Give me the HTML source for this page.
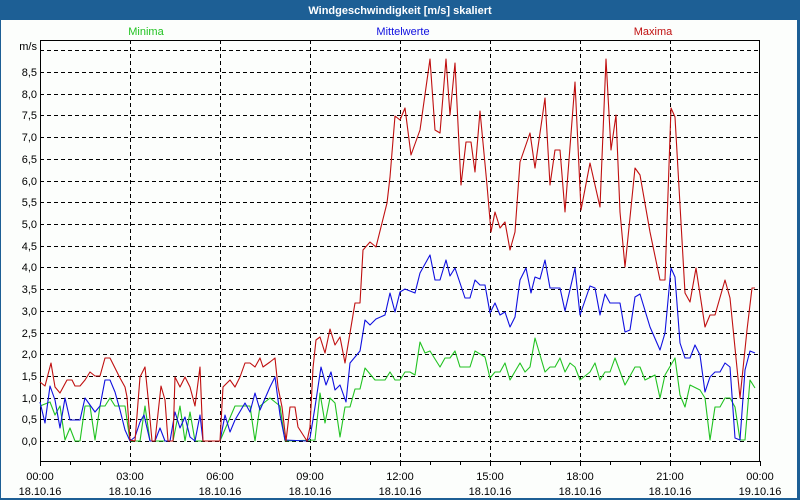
<!DOCTYPE html>
<html><head><meta charset="utf-8"><style>
html,body{margin:0;padding:0;width:800px;height:500px;overflow:hidden;background:#fff}
svg{display:block;font-family:"Liberation Sans","DejaVu Sans",sans-serif}
</style></head><body>
<svg width="800" height="500" viewBox="0 0 800 500" xmlns="http://www.w3.org/2000/svg">
<rect x="0" y="0" width="800" height="500" fill="#1d5f95"/>
<rect x="1" y="20" width="796" height="478" fill="#fcfefc"/>
<text x="400" y="14" fill="#fff" font-size="11" font-weight="bold" text-anchor="middle">Windgeschwindigkeit [m/s] skaliert</text>
<text x="146" y="35" fill="#22c322" font-size="11" text-anchor="middle">Minima</text>
<text x="403" y="35" fill="#1010e0" font-size="11" text-anchor="middle">Mittelwerte</text>
<text x="653" y="35" fill="#c01010" font-size="11" text-anchor="middle">Maxima</text>
<g stroke="#000" stroke-width="1" stroke-dasharray="4,3" fill="none" shape-rendering="crispEdges">
<path d="M40 50.5H760M40 72.5H760M40 94.5H760M40 115.5H760M40 137.5H760M40 159.5H760M40 181.5H760M40 202.5H760M40 224.5H760M40 246.5H760M40 267.5H760M40 289.5H760M40 311.5H760M40 333.5H760M40 354.5H760M40 376.5H760M40 398.5H760M40 419.5H760M40 441.5H760"/>
<path d="M130.5 40V461M220.5 40V461M310.5 40V461M400.5 40V461M490.5 40V461M580.5 40V461M670.5 40V461"/>
</g>
<g stroke="#000" stroke-width="1" fill="none" shape-rendering="crispEdges">
<rect x="40.5" y="40.5" width="719" height="421"/>
<path d="M40.5 461V466M70.5 461V465M100.5 461V465M130.5 461V466M160.5 461V465M190.5 461V465M220.5 461V466M250.5 461V465M280.5 461V465M310.5 461V466M340.5 461V465M370.5 461V465M400.5 461V466M430.5 461V465M460.5 461V465M490.5 461V466M520.5 461V465M550.5 461V465M580.5 461V466M610.5 461V465M640.5 461V465M670.5 461V466M700.5 461V465M730.5 461V465M760.5 461V466"/>
</g>
<g font-size="11" fill="#000" text-anchor="end">
<text x="37" y="50">m/s</text>
<text x="37" y="76">8,5</text><text x="37" y="98">8,0</text><text x="37" y="119">7,5</text><text x="37" y="141">7,0</text><text x="37" y="163">6,5</text><text x="37" y="185">6,0</text><text x="37" y="206">5,5</text><text x="37" y="228">5,0</text><text x="37" y="250">4,5</text><text x="37" y="271">4,0</text><text x="37" y="293">3,5</text><text x="37" y="315">3,0</text><text x="37" y="337">2,5</text><text x="37" y="358">2,0</text><text x="37" y="380">1,5</text><text x="37" y="402">1,0</text><text x="37" y="423">0,5</text><text x="37" y="445">0,0</text>
</g>
<g font-size="11" fill="#000" text-anchor="middle">
<text x="40" y="480">00:00</text><text x="40" y="495">18.10.16</text>
<text x="130" y="480">03:00</text><text x="130" y="495">18.10.16</text>
<text x="220" y="480">06:00</text><text x="220" y="495">18.10.16</text>
<text x="310" y="480">09:00</text><text x="310" y="495">18.10.16</text>
<text x="400" y="480">12:00</text><text x="400" y="495">18.10.16</text>
<text x="490" y="480">15:00</text><text x="490" y="495">18.10.16</text>
<text x="580" y="480">18:00</text><text x="580" y="495">18.10.16</text>
<text x="670" y="480">21:00</text><text x="670" y="495">18.10.16</text>
<text x="760" y="480">00:00</text><text x="760" y="495">19.10.16</text>
</g>
<g fill="none" stroke-width="1.1" stroke-linejoin="round">
<polyline stroke="#22c322" points="40,406 50,402 55,415 60,406 65,440 70,428 75,441 80,441 85,406 90,406 95,440 100,406 105,406 110,398 115,406 125,406 130,441 140,441 145,406 150,441 173,441 180,406 185,441 190,412 195,441 220,441 235,406 250,406 255,441 260,406 270,398 280,406 285,441 315,440 320,393 325,423 330,398 335,403 340,437 345,407 350,407 355,389 360,389 365,368 375,380 385,380 390,372 395,380 400,380 405,372 410,372 415,375 420,342 425,353 430,351 440,367 445,358 450,358 455,351 460,367 470,367 475,351 485,357 490,378 495,372 500,372 505,363 510,380 520,363 525,372 530,367 535,338 545,372 550,367 555,367 560,358 565,372 570,363 575,367 580,380 590,372 595,363 600,380 605,372 610,372 615,358 625,385 635,367 640,367 645,380 655,375 660,398 665,375 675,358 680,395 685,407 690,385 700,390 705,398 710,440 715,407 720,407 725,398 730,398 735,407 740,440 745,440 750,380 755,388"/>
<polyline stroke="#1010e0" points="40,402 45,423 50,386 55,400 60,428 65,398 70,420 80,420 85,398 95,412 100,406 105,380 110,380 115,392 120,410 125,430 130,441 135,437 140,422 144,415 150,441 155,441 160,428 165,441 170,441 175,412 180,428 185,417 190,437 195,441 200,415 203,441 220,441 225,415 230,432 235,420 245,403 250,412 255,393 260,410 270,387 275,377 280,415 285,440 307,441 310,438 315,407 321,367 326,385 331,372 335,390 340,385 346,402 350,363 360,351 365,320 370,325 376,319 385,315 390,293 395,312 400,292 405,289 415,293 420,273 430,255 435,280 440,280 446,260 450,276 455,268 465,298 470,298 475,280 480,285 485,285 490,313 495,303 500,315 505,312 510,327 515,317 520,280 526,268 531,293 535,277 540,279 545,260 550,288 560,288 565,311 575,268 580,315 590,286 595,288 600,315 605,294 610,303 620,303 625,332 630,330 635,297 640,294 650,327 660,350 665,333 671,268 675,277 680,343 685,358 690,358 695,345 700,355 705,392 710,377 715,372 720,372 725,363 730,367 735,438 740,440 745,370 750,351 755,353"/>
<polyline stroke="#c01010" points="40,382 45,386 51,363 55,387 60,393 67,380 72,380 75,386 80,386 85,380 90,372 95,376 100,376 105,358 110,358 115,368 120,378 125,387 127,397 130,440 135,441 140,377 145,367 148,397 152,441 155,441 161,386 165,400 168,441 173,441 175,377 180,387 185,377 190,387 195,406 200,367 203,441 220,441 223,387 230,380 235,387 240,377 245,363 250,363 255,367 260,358 263,367 270,362 275,358 278,387 282,407 286,441 290,407 295,407 298,427 307,441 310,427 313,368 316,340 320,337 325,353 330,329 335,345 340,337 345,363 350,333 355,303 360,303 363,250 370,242 376,247 387,203 390,177 395,116 400,120 405,108 411,155 420,130 430,59 435,130 440,133 446,59 450,115 455,63 461,185 466,142 471,142 475,172 480,111 487,185 491,232 495,212 500,228 505,222 510,250 515,232 520,162 530,133 535,168 545,98 550,185 555,150 560,150 565,212 575,82 581,210 590,163 600,207 606,59 611,150 616,115 620,212 625,267 635,168 640,175 650,232 660,280 665,280 671,108 675,117 685,293 690,302 696,268 705,327 710,315 715,315 725,280 730,298 740,398 747,330 752,288 755,288"/>
</g>
</svg>
</body></html>
